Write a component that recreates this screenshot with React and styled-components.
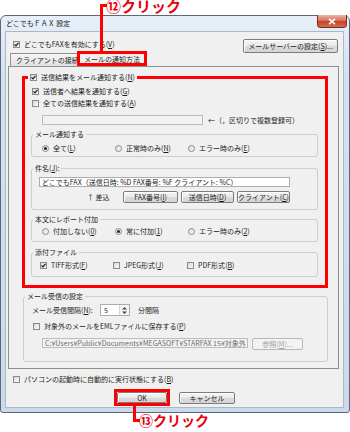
import React from "react";
import styled, { createGlobalStyle } from "styled-components";

const ink = "#1c1c1c";
const red = "#ff0000";
const etch = "#cdcdcd";

const Global = createGlobalStyle`
  html, body { margin: 0; background: #fff; }
  body {
    font-family: "Noto Sans CJK JP", "Noto Sans", sans-serif;
    color: ${ink};
  }
  *, *::before, *::after { box-sizing: border-box; }
  u { text-underline-offset: 1px; text-decoration-thickness: 1px; }
`;

const Stage = styled.div`
  position: relative;
  width: 350px; height: 432px;
  padding-top: 15px;
  overflow: hidden;
  font-size: 7px; line-height: 10px;
  white-space: nowrap;
`;

const Win = styled.div`
  width: 350px; height: 398px;
  display: flex; flex-direction: column;
  padding: 0 5px 4px 4px;
  border: 1px solid #5b6878;
  border-radius: 6px 6px 3px 3px;
  background: linear-gradient(#e8eff8, #d4e1f0 60px, #cbd9ea);
`;

const TitleBar = styled.div`
  height: 15px; flex: none;
  display: flex; align-items: flex-start; justify-content: space-between;
  padding-left: 1px;
  > span { line-height: 15px; }
`;

const Close = styled.div`
  width: 30px; height: 13px; margin: -1px -3px 0 0;
  border: 1px solid #7a2d22; border-top: 0;
  border-radius: 0 0 4px 4px;
  background: linear-gradient(#eeb0a2, #d87560 45%, #c4432b 55%, #d56b50);
  display: flex; align-items: center; justify-content: center;
`;

const Client = styled.div`
  flex: 1; display: flex; flex-direction: column;
  background: #f0f0f0;
  border: 1px solid #a9b8ca;
`;

const TopRow = styled.div`
  display: flex; justify-content: space-between; align-items: flex-start;
  margin-top: 7px; padding: 0 5px 0 7px; height: 14px; flex: none;
`;

const TabStrip = styled.div`
  display: flex; align-items: flex-end;
  height: 13px; padding-left: 4px; flex: none;
`;

const Tab = styled.div`
  width: ${p => p.$w}px;
  height: ${p => (p.$on ? 15 : 13)}px;
  margin-left: ${p => (p.$on ? -2 : 0)}px;
  padding: 0 ${p => (p.$on ? 0 : 5)}px;
  border: ${p => (p.$mark ? `3px solid ${red}` : "1px solid #8e8f8f")};
  border-bottom-width: ${p => (p.$mark ? 3 : 0)}px;
  background: ${p => (p.$on ? "#f0f0f0" : "linear-gradient(#f6f6f6, #e1e1e1)")};
  display: flex; align-items: center;
  justify-content: ${p => (p.$on ? "center" : "flex-start")};
  overflow: hidden;
`;

const Panel = styled.div`
  margin: 0 4px 0 2px;
  border: 1px solid #8e8f8f;
  background: #f0f0f0;
  display: flex; flex-direction: column;
  padding-bottom: 6px;
  flex: none;
`;

const Group = styled.fieldset`
  margin: ${p => p.$m};
  padding: 0 0 ${p => p.$pb}px;
  min-width: 0;
  border: ${p => (p.$red ? `3px solid ${red}` : `1px solid ${etch}`)};
  border-radius: ${p => (p.$red ? 0 : 3)}px;
`;

const Legend = styled.legend`
  margin-left: ${p => p.$ml ?? 1}px;
  padding: 0 2px;
  line-height: 10px;
  height: 10px;
`;

const Row = styled.div`
  display: flex; align-items: ${p => p.$align || "center"};
  height: ${p => p.$h || 10}px;
  margin-top: ${p => p.$mt || 0}px;
  padding-left: ${p => p.$pl || 0}px;
  gap: ${p => p.$gap || 0}px;
  flex: none;
`;

const Opt = styled.span`
  display: inline-flex; align-items: center;
  height: 10px; vertical-align: top;
  width: ${p => (p.$w ? `${p.$w}px` : "auto")};
  flex: none;
`;

const Box = styled.span`
  width: 7px; height: 7px; flex: none;
  margin-right: 4px;
  border: 1px solid #8a8a8a;
  border-radius: ${p => (p.$round ? "50%" : "0")};
  background: linear-gradient(135deg, #d9d9d9, #fbfbfb);
  display: inline-flex; align-items: center; justify-content: center;
  &::after {
    content: "";
    display: ${p => (p.$round && p.$on ? "block" : "none")};
    width: 3px; height: 3px; border-radius: 50%;
    background: #222;
  }
`;

const Btn = styled.button`
  font: inherit; color: ${ink};
  width: ${p => p.$w}px; height: ${p => p.$h || 12}px;
  padding: 0; flex: none;
  border: 1px solid #7c7c7c; border-radius: 2px;
  background: linear-gradient(#f5f5f5, #e9e9e9 50%, #dcdcdc 51%, #d4d4d4);
  box-shadow: inset 1px 1px #fff;
  line-height: 10px;
  display: inline-flex; align-items: center; justify-content: center;
  &:disabled {
    color: #a3a3a3; border-color: #b9b9b9;
    background: #f3f3f3; box-shadow: none;
  }
`;

const Field = styled.input`
  font: inherit; color: ${p => (p.$dim ? "#6d6d6d" : ink)};
  width: ${p => p.$w}px; height: 10px; flex: none;
  padding: 0 0 0 2px; margin: 0;
  border: 1px solid ${p => (p.$dim ? "#bdbdbd" : "#abadb3")};
  background: ${p => (p.$dim ? "#f2f2f2" : "#fff")};
  line-height: 8px; outline: none;
`;

const Hint = styled.span`
  margin-left: 5px;
`;

const Caption = styled.span`
  width: ${p => p.$w}px; flex: none;
`;

const Spin = styled.div`
  width: 30px; height: 12px; margin-left: 0;
  display: flex; flex: none;
  border: 1px solid #abadb3; background: #fff;
  > span { flex: 1; padding-left: 3px; line-height: 10px; }
`;

const Arrows = styled.div`
  width: 10px; display: flex; align-items: center; justify-content: center;
  border-left: 1px solid #d6d6d6; background: #f4f4f4;
`;

const Unit = styled.span`
  margin-left: 8px;
`;

const Actions = styled.div`
  display: flex; justify-content: center; align-items: center;
  gap: 9px; margin-top: 5px; height: 17px; flex: none;
`;

const Mark = styled.span`
  display: flex; border: 3px solid ${red};
`;

const Leader = styled.div`
  position: absolute;
  left: ${p => p.$x}px; top: ${p => p.$y}px;
  width: ${p => p.$w}px; height: ${p => p.$h}px;
  border-left: 3px solid ${red};
  border-${p => p.$end}: 3px solid ${red};
`;

const Callout = styled.div`
  position: absolute;
  left: ${p => p.$x}px; top: ${p => p.$y}px;
  font-family: "Noto Sans CJK JP", sans-serif;
  font-weight: 700;
  font-size: ${p => p.$size}px;
  line-height: ${p => p.$lh}px;
  color: #e8000e;
`;

function Mn({ children }) {
  const m = /^(.*)\((.)\)(.*)$/.exec(children);
  if (!m) return children;
  return <>{m[1]}(<u>{m[2]}</u>){m[3]}</>;
}

function Check({ on, w, children }) {
  return (
    <Opt $w={w}>
      <Box $on={on}>
        {on && (
          <svg width="5" height="5" viewBox="0 0 5 5">
            <path d="M0.5 2.4 L2 3.9 L4.5 0.8" fill="none" stroke="#1a1a1a" strokeWidth="1.2" />
          </svg>
        )}
      </Box>
      <span><Mn>{children}</Mn></span>
    </Opt>
  );
}

function Radio({ on, w, children }) {
  return (
    <Opt $w={w}>
      <Box $round $on={on} />
      <span><Mn>{children}</Mn></span>
    </Opt>
  );
}

export default function App() {
  return (
    <Stage>
      <Global />
      <Win>
        <TitleBar>
          <span>どこでもＦＡＸ 設定</span>
          <Close>
            <svg width="8" height="7" viewBox="0 0 8 7">
              <path d="M1 0.8 L7 6.2 M7 0.8 L1 6.2" stroke="#fff" strokeWidth="1.6" />
            </svg>
          </Close>
        </TitleBar>

        <Client>
          <TopRow>
            <Check on>どこでもFAXを有効にする(V)</Check>
            <Btn $w={95} $h={14}><Mn>メールサーバーの設定(S)...</Mn></Btn>
          </TopRow>

          <TabStrip>
            <Tab $w={69}>クライアントの接続</Tab>
            <Tab $w={70} $on $mark>メールの通知方法</Tab>
          </TabStrip>

          <Panel>
            <Group $red $m="5px 10px 0 13px" $pb={8}>
              <Legend $ml={3}>
                <Check on>送信結果をメール通知する(N)</Check>
              </Legend>
              <Row $mt={4} $pl={7}><Check on>送信者へ結果を通知する(G)</Check></Row>
              <Row $mt={2} $pl={7}><Check>全ての送信結果を通知する(A)</Check></Row>
              <Row $mt={7} $pl={17}>
                <Field $w={161} $dim readOnly value="" />
                <Hint>←（，区切りで複数登録可）</Hint>
              </Row>

              <Group $m="4px 7px 0 6px" $pb={3}>
                <Legend>メール通知する</Legend>
                <Row $mt={4} $pl={10}>
                  <Radio on w={73}>全て(L)</Radio>
                  <Radio w={73}>正常時のみ(N)</Radio>
                  <Radio>エラー時のみ(E)</Radio>
                </Row>
              </Group>

              <Group $m="6px 7px 0 6px" $pb={6}>
                <Legend><Mn>件名(J):</Mn></Legend>
                <Row $mt={4} $pl={7}>
                  <Field $w={251} readOnly value="どこでもFAX（送信日時: %D FAX番号: %F クライアント: %C）" />
                </Row>
                <Row $mt={4} $h={12} $pl={55} $gap={3}>
                  <Caption $w={33}>↑ 差込</Caption>
                  <Btn $w={55}><Mn>FAX番号(I)</Mn></Btn>
                  <Btn $w={53}><Mn>送信日時(D)</Mn></Btn>
                  <Btn $w={53}><Mn>クライアント(C)</Mn></Btn>
                </Row>
              </Group>

              <Group $m="4px 7px 0 6px" $pb={5}>
                <Legend>本文にレポート付加</Legend>
                <Row $mt={2} $pl={10}>
                  <Radio w={73}>付加しない(0)</Radio>
                  <Radio on w={73}>常に付加(1)</Radio>
                  <Radio>エラー時のみ(2)</Radio>
                </Row>
              </Group>

              <Group $m="5px 7px 0 6px" $pb={6}>
                <Legend>添付ファイル</Legend>
                <Row $mt={3} $pl={8}>
                  <Check on w={73}>TIFF形式(F)</Check>
                  <Check w={74}>JPEG形式(J)</Check>
                  <Check>PDF形式(B)</Check>
                </Row>
              </Group>
            </Group>

            <Group $m="3px 10px 0 14px" $pb={11}>
              <Legend>メール受信の設定</Legend>
              <Row $mt={3} $h={12} $pl={8}>
                <Caption $w={68}><Mn>メール受信間隔(N):</Mn></Caption>
                <Spin>
                  <span>5</span>
                  <Arrows>
                    <svg width="7" height="9" viewBox="0 0 7 9">
                      <path d="M3.5 1 L6 3.5 L1 3.5 Z M1 5.5 L6 5.5 L3.5 8 Z" fill="#4a4a4a" />
                    </svg>
                  </Arrows>
                </Spin>
                <Unit>分間隔</Unit>
              </Row>
              <Row $mt={5} $pl={9}>
                <Check>対象外のメールをEMLファイルに保存する(P)</Check>
              </Row>
              <Row $mt={7} $h={12} $pl={18} $gap={4} $align="flex-start">
                <Field $w={206} $dim readOnly value="C:¥Users¥Public¥Documents¥MEGASOFT¥STARFAX 15¥対象外" />
                <Btn $w={51} disabled><Mn>参照(M)...</Mn></Btn>
              </Row>
            </Group>
          </Panel>

          <Row $mt={5} $pl={7}>
            <Check>パソコンの起動時に自動的に実行状態にする(B)</Check>
          </Row>

          <Actions>
            <Mark><Btn $w={50} $h={11}>OK</Btn></Mark>
            <Btn $w={56}>キャンセル</Btn>
          </Actions>
        </Client>
      </Win>

      <Leader $x={100} $y={4} $w={7} $h={47} $end="top" />
      <Callout $x={106} $y={0} $size={15} $lh={11}>⑫クリック</Callout>
      <Leader $x={133} $y={406} $w={7} $h={16} $end="bottom" />
      <Callout $x={139} $y={413} $size={14} $lh={15}>⑬クリック</Callout>
    </Stage>
  );
}
